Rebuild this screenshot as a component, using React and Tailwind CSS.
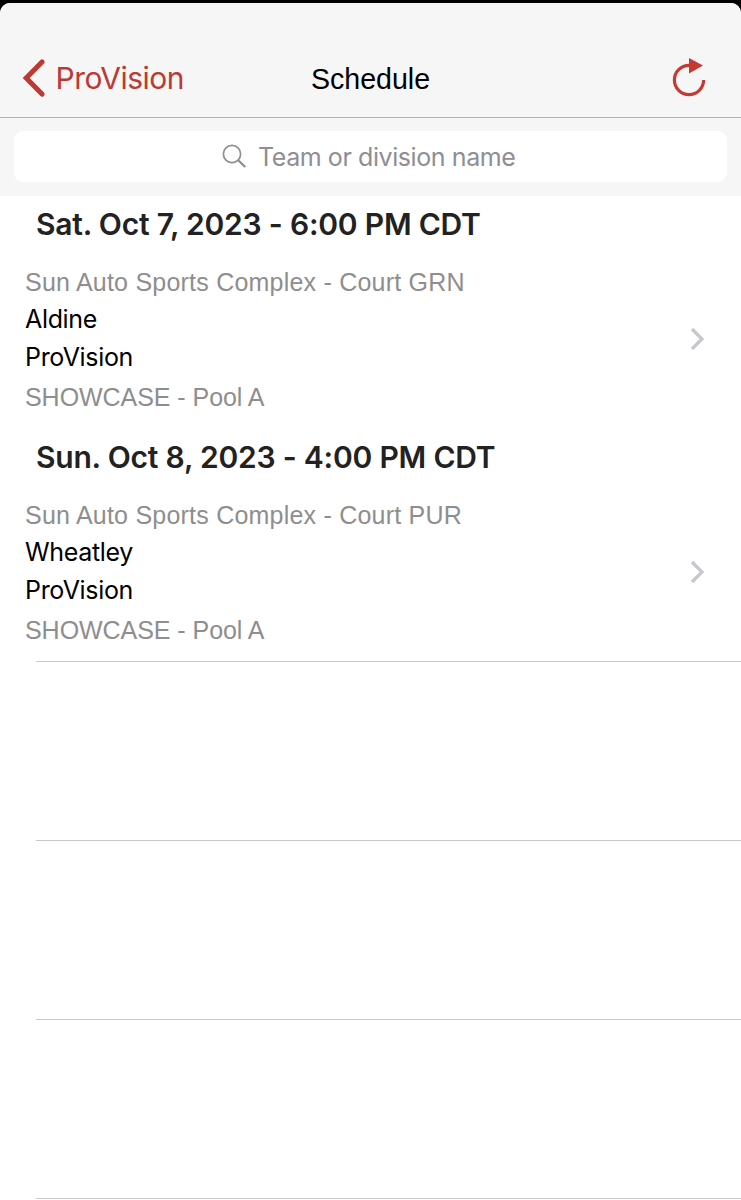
const sections = [
  {
    title: 'Sat. Oct 7, 2023 - 6:00 PM CDT',
    location: 'Sun Auto Sports Complex - Court GRN',
    home: 'Aldine',
    away: 'ProVision',
    pool: 'SHOWCASE - Pool A',
  },
  {
    title: 'Sun. Oct 8, 2023 - 4:00 PM CDT',
    location: 'Sun Auto Sports Complex - Court PUR',
    home: 'Wheatley',
    away: 'ProVision',
    pool: 'SHOWCASE - Pool A',
  },
]

export default function App() {
  return (
    <div className="h-[1200px] w-[741px] overflow-hidden bg-black pt-[3px] font-['Inter',sans-serif]">
      <div className="h-[1197px] overflow-hidden rounded-t-[10px] bg-white">
        <NavBar />
        <SearchBar />
        {sections.map(section => (
          <Section key={section.title} {...section} />
        ))}
        <EmptyRows />
      </div>
    </div>
  )
}

function NavBar() {
  return (
    <header className="grid h-[115px] grid-cols-3 items-center border-b border-[#b2b2b2] bg-[#f6f6f6] pt-[36px]">
      <button className="flex items-center pl-[22px] text-left text-[#bb3a34]">
        <svg width="24" height="38" viewBox="0 0 24 38" fill="none" stroke="currentColor" strokeWidth="5" strokeLinecap="round">
          <path d="M20 2.9 L4.2 19 L20 35.1" strokeLinejoin="miter" />
        </svg>
        <span className="ml-[9.5px] text-[30px] leading-[38px] tracking-[-0.53px]">ProVision</span>
      </button>
      <h1 className="pt-px text-center font-['Liberation_Sans',sans-serif] text-[28.6px] leading-[38px] text-black">Schedule</h1>
      <button className="flex justify-end pr-[34px] pb-[3px]">
        <svg width="36" height="40" viewBox="0 0 36 40" fill="none">
          <path d="M18 8.4 A14.6 14.6 0 1 0 32.6 23" stroke="#c23a33" strokeWidth="3.2" />
          <path d="M18 1 L32 8.5 L18 16.5 Z" fill="#c23a33" />
        </svg>
      </button>
    </header>
  )
}

function SearchBar() {
  return (
    <div className="h-[78px] bg-[#f6f6f6] px-[14px] pt-[13px]">
      <div className="flex h-[51px] items-center rounded-[9px] bg-white pl-[208px] text-[#8e8e93]">
        <svg width="25" height="25" viewBox="0 0 25 25" fill="none" stroke="currentColor">
          <circle cx="10" cy="10" r="8.6" strokeWidth="1.7" />
          <path d="M16.2 16.2 L23.2 23" strokeWidth="2.3" />
        </svg>
        <span className="ml-[11px] pt-[2px] text-[25px] tracking-[-0.42px]">Team or division name</span>
      </div>
    </div>
  )
}

function Section({ title, location, home, away, pool }) {
  return (
    <section>
      <h2 className="h-[54px] pl-[36px] pt-px text-[30px] leading-[54px] font-semibold tracking-[-0.21px] text-[#222] whitespace-nowrap">
        {title}
      </h2>
      <div className="flex h-[179px] items-center justify-between pl-[25px] pr-[36px] whitespace-nowrap">
        <div className="h-[151px] text-[25px] text-black">
          <p className="font-['Liberation_Sans',sans-serif] leading-[36px] tracking-[0.22px] text-[#8e8e8e]">{location}</p>
          <p className="leading-[38px] tracking-[-0.33px]">{home}</p>
          <p className="pt-px leading-[37px] tracking-[-0.33px]">{away}</p>
          <p className="font-['Liberation_Sans',sans-serif] leading-[42px] tracking-[-0.05px] text-[#8e8e8e]">{pool}</p>
        </div>
        <svg className="mb-[2px]" width="15" height="24" viewBox="0 0 15 24" fill="none" stroke="#c7c7cc" strokeWidth="3.2">
          <path d="M2 2 L12 12 L2 22" />
        </svg>
      </div>
    </section>
  )
}

function EmptyRows() {
  return (
    <div className="-mt-px pl-[36px]">
      {[0, 1, 2, 3].map(i => (
        <div key={i} className="h-[179px] border-t border-[#c8c8cc]" />
      ))}
    </div>
  )
}
